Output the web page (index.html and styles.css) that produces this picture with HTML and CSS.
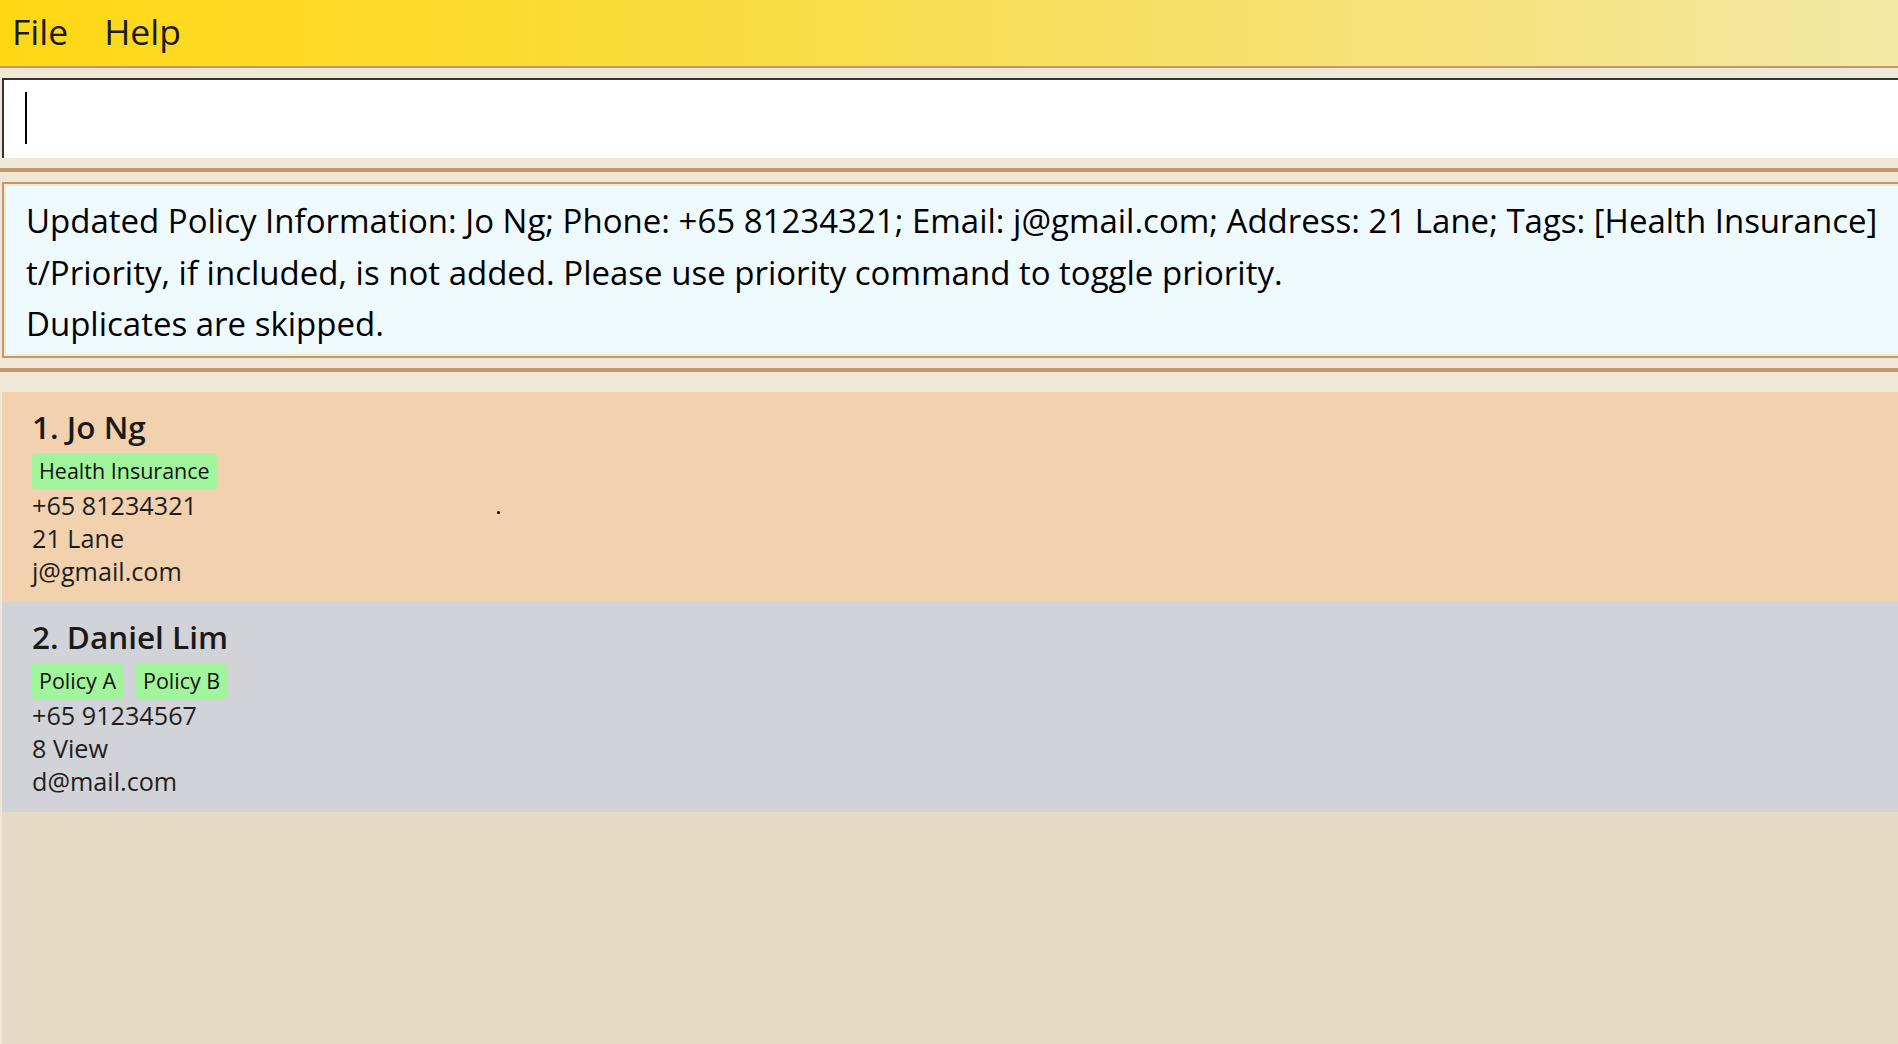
FILE: index.html
```html
<!DOCTYPE html>
<html lang="en">
<head>
<meta charset="utf-8">
<title>Policy Book</title>
<link rel="stylesheet" href="styles.css">
</head>
<body>
<div class="app">
  <nav class="menubar">
    <span class="menu-item">File</span>
    <span class="menu-item">Help</span>
  </nav>

  <div class="command-pane">
    <div class="command-box"><span class="caret"></span></div>
  </div>

  <div class="divider"></div>

  <div class="result-pane">
    <div class="result-box">
      <div class="result-inner">
        <p class="result-line">Updated Policy Information: Jo Ng; Phone: +65 81234321; Email: j@gmail.com; Address: 21 Lane; Tags: [Health Insurance]</p>
        <p class="result-line">t/Priority, if included, is not added. Please use priority command to toggle priority.</p>
        <p class="result-line">Duplicates are skipped.</p>
      </div>
    </div>
  </div>

  <div class="divider"></div>

  <div class="list-pane">
    <ul class="person-list">
      <li class="card card-priority">
        <div class="card-title">1. Jo Ng</div>
        <div class="tags"><span class="tag">Health Insurance</span></div>
        <div class="field">+65 81234321</div>
        <div class="field">21 Lane</div>
        <div class="field">j@gmail.com</div>
        <span class="dot"></span>
      </li>
      <li class="card card-normal">
        <div class="card-title">2. Daniel Lim</div>
        <div class="tags"><span class="tag">Policy A</span><span class="tag">Policy B</span></div>
        <div class="field">+65 91234567</div>
        <div class="field">8 View</div>
        <div class="field">d@mail.com</div>
      </li>
    </ul>
  </div>
</div>
</body>
</html>
```

FILE: styles.css
```css
* {
  box-sizing: border-box;
}

html, body {
  margin: 0;
  padding: 0;
  height: 100%;
}

body {
  background: #F0E8D7;
  font-family: "Open Sans", "Noto Sans", sans-serif;
  color: #1c1c1c;
  overflow: hidden;
}

.app {
  display: flex;
  flex-direction: column;
  height: 100vh;
  overflow: hidden;
}

/* Menu bar */
.menubar {
  flex: 0 0 auto;
  height: 68px;
  display: flex;
  align-items: flex-start;
  gap: 36px;
  padding-left: 12px;
  background: linear-gradient(to right, #FFD814 0%, #FBDB36 32%, #F7DF62 58%, #F5E380 79%, #F3E8A6 100%);
  border-bottom: 2px solid #C4966A;
}

.menu-item {
  font-size: 35.5px;
  line-height: 62px;
  color: #1a1a1a;
}

/* Command box */
.command-pane {
  flex: 0 0 auto;
  padding: 10px 0 10px 2px;
}

.command-box {
  height: 80px;
  margin-right: -20px;
  background: #FFFFFF;
  border-top: 2px solid #333333;
  border-left: 2px solid #333333;
  padding: 12px 0 0 21px;
}

.caret {
  display: block;
  width: 2px;
  height: 52px;
  background: #000000;
}

/* Dividers */
.divider {
  flex: 0 0 auto;
  height: 4px;
  background: #C4966A;
}

/* Result box */
.result-pane {
  flex: 0 0 auto;
  padding: 10px 0 10px 2px;
}

.result-box {
  height: 176px;
  margin-right: -20px;
  border: 2px solid #C4966A;
  padding: 2px;
  background: #F0E8D7;
}

.result-inner {
  height: 100%;
  background: #EFFAFE;
  padding: 9px 0 0 20px;
}

.result-line {
  margin: 0;
  font-size: 33px;
  line-height: 51.5px;
  color: #000000;
  white-space: nowrap;
}

/* Person list */
.list-pane {
  flex: 1 1 auto;
  padding: 20px 0 0 2px;
}

.person-list {
  list-style: none;
  margin: 0;
  padding: 0;
  height: 100%;
  background: #E5DAC3;
}

.card {
  position: relative;
  height: 210px;
  padding: 15px 0 0 30px;
}

.card-priority {
  background: #F2D1AF;
}

.card-normal {
  background: #D2D3D8;
}

.card-title {
  font-size: 31.5px;
  font-weight: 600;
  line-height: 40px;
  color: #1a1a1a;
}

.tags {
  display: flex;
  gap: 13px;
  margin-top: 6px;
}

.tag {
  background: #A1F59C;
  border-radius: 4px;
  padding: 4px 7px;
  font-size: 21.5px;
  line-height: 28px;
  color: #111111;
}

.field {
  font-size: 25.2px;
  line-height: 33px;
  color: #1e1e1e;
}

.dot {
  position: absolute;
  left: 495px;
  top: 119px;
  width: 3px;
  height: 3px;
  border-radius: 50%;
  background: #000000;
}
```
